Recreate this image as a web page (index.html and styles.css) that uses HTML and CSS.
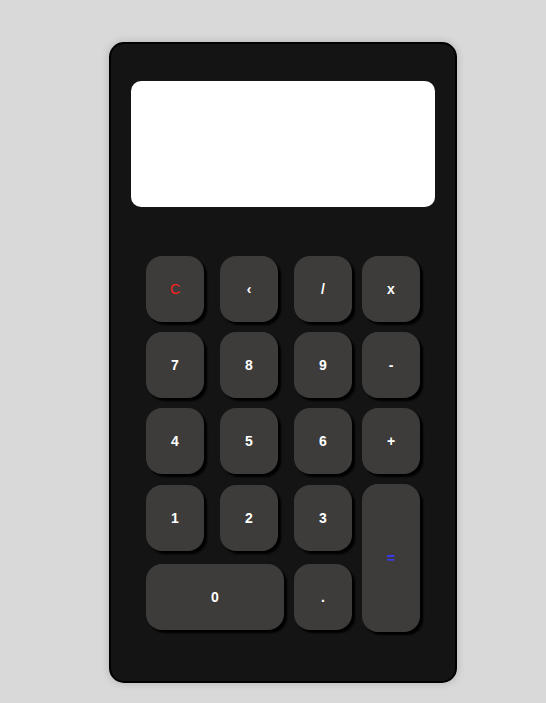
FILE: index.html
```html
<!DOCTYPE html>
<html>
<head>
<meta charset="utf-8">
<link rel="stylesheet" href="styles.css">
</head>
<body>
<div class="calc">
  <div class="display"></div>
  <div class="keys">
    <button class="key clear">C</button>
    <button class="key">‹</button>
    <button class="key">/</button>
    <button class="key">x</button>
    <button class="key">7</button>
    <button class="key">8</button>
    <button class="key">9</button>
    <button class="key">-</button>
    <button class="key">4</button>
    <button class="key">5</button>
    <button class="key">6</button>
    <button class="key">+</button>
    <button class="key">1</button>
    <button class="key">2</button>
    <button class="key">3</button>
    <button class="key equals">=</button>
    <button class="key zero">0</button>
    <button class="key">.</button>
  </div>
</div>
</body>
</html>
```

FILE: styles.css
```css
html, body {
  margin: 0;
  padding: 0;
  background: #d9d9d9;
  height: 100%;
}
body {
  padding: 42px 0 0 109px;
  box-sizing: border-box;
  font-family: "Liberation Sans", Arial, sans-serif;
}
.calc {
  width: 348px;
  height: 641px;
  box-sizing: border-box;
  background: #141414;
  border: 2px solid #000;
  border-radius: 15px;
  box-shadow: 0 0 8px rgba(0,0,0,0.18);
  padding: 37px 20px 0 20px;
}
.display {
  width: 304px;
  height: 126px;
  background: #fff;
  border-radius: 10px;
}
.keys {
  margin: 49px 0 0 15px;
  display: grid;
  grid-template-columns: 74px 74px 68px 58px;
  grid-template-rows: 76px 76px 77px 79px 68px;
}
.key {
  width: 58px;
  height: 66px;
  border: none;
  padding: 0;
  margin: 0;
  background: #3d3c3b;
  border-radius: 16px;
  box-shadow: 3px 3px 2px #000;
  color: #fff;
  font-family: "Liberation Sans", Arial, sans-serif;
  font-size: 14px;
  font-weight: 600;
  display: flex;
  align-items: center;
  justify-content: center;
}
.clear {
  color: #ff1f1f;
  font-weight: 400;
}
.equals {
  grid-column: 4;
  grid-row: 4 / span 2;
  height: 148px;
  margin-top: -1px;
  color: #3a3aff;
}
.zero {
  grid-column: 1 / span 2;
  width: 138px;
}
```
